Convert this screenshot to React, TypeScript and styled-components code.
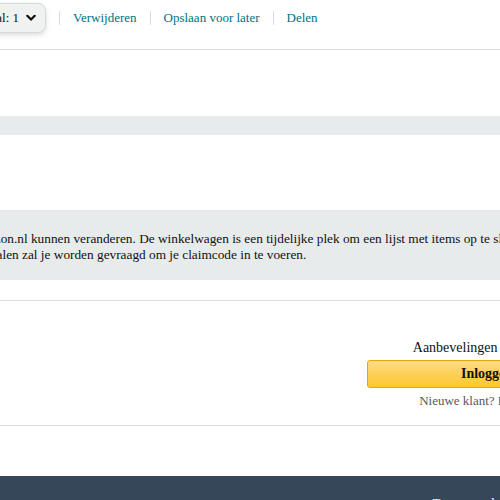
import React from 'react';
import styled, { createGlobalStyle } from 'styled-components';

const GlobalStyle = createGlobalStyle`
  html, body {
    margin: 0;
    padding: 0;
    background: #ffffff;
    overflow: hidden;
  }
  body {
    font-family: "Liberation Serif", "Times New Roman", serif;
    color: #0f1111;
  }
`;

const Page = styled.div`
  width: 1556px;
  margin-left: -300px;
`;

const ItemActions = styled.div`
  display: flex;
  align-items: center;
  height: 30px;
  padding: 3px 0 0 260px;
  margin-bottom: 16px;
`;

const QuantityButton = styled.button`
  display: flex;
  align-items: center;
  justify-content: flex-end;
  gap: 7px;
  box-sizing: border-box;
  width: 86px;
  height: 30px;
  padding: 0 9px 0 10px;
  background: #f0f2f2;
  border: 1px solid #d5d9d9;
  border-radius: 8px;
  box-shadow: 0 2px 5px rgba(15, 17, 17, 0.15);
  font-family: inherit;
  font-size: 13px;
  color: #0f1111;
`;

const Separator = styled.span`
  width: 1px;
  height: 14px;
  background: #dddddd;
  margin: 0 13px;
`;

const ActionLink = styled.a`
  font-size: 13px;
  color: #007185;
  text-decoration: none;
  line-height: 16px;
`;

const Divider = styled.hr`
  margin: 0;
  border: 0;
  border-top: 1px solid #dddddd;
`;

const SubtotalBand = styled.div`
  margin-top: 66px;
  height: 19px;
  background: #e8ebeb;
`;

const InfoBand = styled.div`
  margin-top: 75px;
  background: #e8ebeb;
  padding: 21px 0 17px 47px;
  margin-bottom: 20px;
`;

const InfoLine = styled.p`
  margin: 0;
  font-size: 13.3px;
  line-height: 16px;
  white-space: nowrap;
  color: #0f1111;
`;

const SignInSection = styled.div`
  display: flex;
  justify-content: flex-end;
  padding: 38px 649px 16px 0;
`;

const SignInBox = styled.div`
  width: 240px;
  display: flex;
  flex-direction: column;
  align-items: stretch;
  text-align: center;
`;

const BoxTitle = styled.div`
  font-size: 14px;
  line-height: 18px;
  margin-bottom: 3px;
  margin-right: 12px;
  color: #0f1111;
`;

const SignInButton = styled.button`
  box-sizing: border-box;
  height: 28px;
  border: 1px solid #e8a600;
  border-radius: 3px;
  background: linear-gradient(to bottom, #ffdc86 0%, #ffd46a 30%, #ffc72c 100%);
  font-family: inherit;
  font-size: 14px;
  font-weight: bold;
  color: #0f1111;
`;

const NewCustomer = styled.div`
  margin-top: 5px;
  font-size: 13px;
  line-height: 16px;
  color: #565959;

  a {
    color: #007185;
    text-decoration: none;
  }
`;

const BackToTop = styled.div`
  margin-top: 50px;
  height: 50px;
  background: #37475a;
  color: #ffffff;
  font-size: 13px;
  line-height: 16px;
  text-align: center;
  padding-top: 19px;
  box-sizing: border-box;
`;

const Chevron = () => (
  <svg width="10" height="8" viewBox="0 0 10 8" aria-hidden="true">
    <polyline
      points="1.3,1.8 5,5.6 8.7,1.8"
      fill="none"
      stroke="#0f1111"
      strokeWidth="2.2"
      strokeLinecap="round"
      strokeLinejoin="round"
    />
  </svg>
);

const actions = ['Verwijderen', 'Opslaan voor later', 'Delen'];

const App: React.FC = () => (
  <>
    <GlobalStyle />
    <Page>
      <ItemActions>
        <QuantityButton>
          <span>Aantal: 1</span>
          <Chevron />
        </QuantityButton>
        {actions.map((label) => (
          <React.Fragment key={label}>
            <Separator />
            <ActionLink href="#">{label}</ActionLink>
          </React.Fragment>
        ))}
      </ItemActions>
      <Divider />

      <SubtotalBand />

      <InfoBand>
        <InfoLine>
          De prijs en beschikbaarheid van items op Amazon.nl kunnen veranderen. De winkelwagen is een tijdelijke plek om een lijst met items op te slaan en geeft de meest recente prijs van elk item weer.
        </InfoLine>
        <InfoLine>
          Heb je een cadeaubon of actiecode? Bij het betalen zal je worden gevraagd om je claimcode in te voeren.
        </InfoLine>
      </InfoBand>
      <Divider />

      <SignInSection>
        <SignInBox>
          <BoxTitle>Aanbevelingen bekijken</BoxTitle>
          <SignInButton>Inloggen</SignInButton>
          <NewCustomer>
            Nieuwe klant? <a href="#">Begin hier.</a>
          </NewCustomer>
        </SignInBox>
      </SignInSection>
      <Divider />

      <BackToTop>Terug naar boven</BackToTop>
    </Page>
  </>
);

export default App;
